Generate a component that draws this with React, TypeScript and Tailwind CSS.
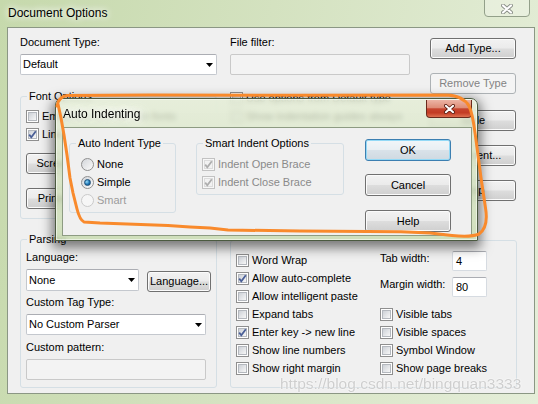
import type { ReactNode } from "react";

type Kids = { children?: ReactNode; className?: string };

function Btn({ children, className = "", disabled = false, primary = false }: Kids & { disabled?: boolean; primary?: boolean }) {
  const look = disabled
    ? "border-[#adb2b5] bg-[#f4f4f4] text-[#838383]"
    : primary
      ? "border-[#3c7fb1] bg-[linear-gradient(#f1f6f9_0%,#e9eff3_48%,#d9e2e9_52%,#cfd9e1_100%)] shadow-[inset_0_0_0_1px_#93d9f6]"
      : "border-[#707070] bg-[linear-gradient(#f2f2f2_0%,#ebebeb_48%,#dddddd_52%,#cfcfcf_100%)] shadow-[inset_0_0_0_1px_#fbfbfb]";
  return (
    <div className={`flex shrink-0 items-center justify-center overflow-hidden whitespace-nowrap rounded-[3px] border ${look} ${className}`}>
      {children}
    </div>
  );
}

function Check({ checked = false, disabled = false }: { checked?: boolean; disabled?: boolean }) {
  return (
    <span className={`relative flex h-[13px] w-[13px] shrink-0 items-center justify-center border ${disabled ? "border-[#c2c2c2] bg-[#f7f7f7]" : "border-[#8f8f8f] bg-white"}`}>
      <span className={`h-[9px] w-[9px] border ${disabled ? "border-[#dcdcdc] bg-[#f2f2f2]" : "border-[#b4b8be] bg-[linear-gradient(135deg,#cdd1d7,#f7f7f7)]"}`} />
      {checked && (
        <svg className="absolute inset-0" width="11" height="11" viewBox="0 0 11 11">
          <path d="M2.2 5.6 L4.3 8.2 L8.8 2.2" fill="none" stroke={disabled ? "#aeaeae" : "#4a5f97"} strokeWidth="1.8" />
        </svg>
      )}
    </span>
  );
}

function Radio({ checked = false, disabled = false }: { checked?: boolean; disabled?: boolean }) {
  return (
    <span className={`flex h-[13px] w-[13px] shrink-0 items-center justify-center rounded-full border ${disabled ? "border-[#cacaca] bg-[#f6f6f6]" : "border-[#8f8f8f] bg-[linear-gradient(135deg,#d2d5da,#fbfbfb)]"}`}>
      {checked && <span className="h-[7px] w-[7px] rounded-full border border-[#1d4f78] bg-[radial-gradient(circle_at_35%_35%,#9adcf8,#1f78b8_55%,#0d4471)]" />}
    </span>
  );
}

function Group({ label, className = "", children }: Kids & { label: string }) {
  return (
    <fieldset className={`rounded-[3px] border border-[#d5dfe5] ${className}`}>
      <legend className="ml-[6px] px-[2px] leading-[13px] whitespace-nowrap">{label}</legend>
      {children}
    </fieldset>
  );
}

function Combo({ value, className = "" }: { value: string; className?: string }) {
  return (
    <div className={`flex items-center justify-between rounded-[2px] border border-[#c4c8ce] border-t-[#abadb3] bg-white pl-[2px] pr-[3px] ${className}`}>
      <span className="whitespace-nowrap">{value}</span>
      <svg width="7" height="4" viewBox="0 0 7 4">
        <path d="M0 0H7L3.5 4Z" fill="#000" />
      </svg>
    </div>
  );
}

function Field({ value = "", disabled = false, className = "" }: { value?: string; disabled?: boolean; className?: string }) {
  return (
    <div className={`flex items-center rounded-[2px] border pl-[3px] ${disabled ? "border-[#c9c9c9] bg-[#f3f3f3]" : "border-[#d6dbe1] border-t-[#abadb3] bg-white"} ${className}`}>
      {value}
    </div>
  );
}

function Row({ children, className = "" }: Kids) {
  return <div className={`flex h-[18px] items-center gap-[3px] whitespace-nowrap ${className}`}>{children}</div>;
}

function XGlyph({ dark, w, h }: { dark: string; w: number; h: number }) {
  return (
    <svg width={w} height={h} viewBox="0 0 12 10">
      <path d="M2 1.5 L10 8.5 M10 1.5 L2 8.5" stroke={dark} strokeWidth="4" strokeLinecap="round" />
      <path d="M2 1.5 L10 8.5 M10 1.5 L2 8.5" stroke="#fff" strokeWidth="2.2" strokeLinecap="round" />
    </svg>
  );
}

function AutoIndentDialog() {
  return (
    <div className="absolute left-[55px] top-[98px] flex h-[143px] w-[423px] flex-col rounded-t-[7px] border border-[#4b5a40] bg-[linear-gradient(rgba(228,237,213,0.8),rgba(200,219,176,0.82))] shadow-[0_4px_12px_3px_rgba(0,0,0,0.5),inset_0_0_0_1px_rgba(255,255,255,0.55)] backdrop-blur-[2.5px]">
      <div className="flex h-[28px] shrink-0">
        <span className="self-center pl-[7px] pt-[2px] text-[12px] [text-shadow:0_0_6px_#fff,0_0_10px_#fff,0_0_14px_#fff]">Auto Indenting</span>
        <div className="ml-auto mr-[5px] mt-[1px] flex h-[18px] w-[46px] items-center justify-center rounded-b-[4px] border border-t-0 border-[#6a2a1c] bg-[linear-gradient(#ecb4a5_0%,#de8d78_45%,#c6452f_52%,#c33c24_75%,#de7050_100%)]">
          <XGlyph dark="#5b1e12" w={11} h={10} />
        </div>
      </div>
      <div className="mb-[4px] ml-[6px] mr-[5px] flex-1 border border-[#8d9b82] bg-[#f0f0f0]">
        <div className="flex items-start pl-[6px] pt-[9px]">
          <Group label="Auto Indent Type" className="h-[76px] w-[107px]">
            <div className="pl-[11px] pt-[5px]">
              <Row><Radio />None</Row>
              <Row><Radio checked />Simple</Row>
              <Row className="text-[#9c9c9c]"><Radio disabled />Smart</Row>
            </div>
          </Group>
          <Group label="Smart Indent Options" className="ml-[20px] h-[58px] w-[148px]">
            <div className="pl-[5px] pt-[5px] text-[#8a8a8a]">
              <Row><Check checked disabled />Indent Open Brace</Row>
              <Row><Check checked disabled />Indent Close Brace</Row>
            </div>
          </Group>
          <div className="ml-[21px] flex w-[86px] flex-col">
            <Btn primary className="mt-[2px] h-[22px]">OK</Btn>
            <Btn className="mt-[13px] h-[22px]">Cancel</Btn>
            <Btn className="mt-[14px] h-[22px]">Help</Btn>
          </div>
        </div>
      </div>
    </div>
  );
}

export default function App() {
  return (
    <div className="relative h-[404px] w-[538px] overflow-hidden bg-[linear-gradient(100deg,#c6d9ac_0%,#d4e2c0_45%,#e5eed9_100%)] font-['Liberation_Sans',Arial,sans-serif] text-[11px] leading-[13px] text-black">
      <div className="flex h-[27px] items-center pl-[8px]">
        <span className="text-[12px] [text-shadow:0_0_6px_#fff,0_0_10px_#fff]">Document Options</span>
      </div>
      <div className="absolute left-[484px] top-[-1px] flex h-[18px] w-[46px] items-center justify-center rounded-b-[4px] border border-[#93a08a] bg-[rgba(255,255,255,0.25)] pt-[1px]">
        <XGlyph dark="#8a8f88" w={12} h={10} />
      </div>

      <div className="ml-[7px] mr-[3px] h-[367px] border border-[#8b9784] bg-[#f0f0f0]">
        <div className="flex h-[205px] pl-[12px] pt-[8px]">
          <div className="flex w-[197px] flex-col">
            <span>Document Type:</span>
            <Combo value="Default" className="mt-[5px] h-[21px]" />
            <Group label="Font Options" className="mt-[15px] h-[129px]">
              <div className="pl-[5px] pt-[4px]">
                <Row><Check />Embolden text for thin fonts</Row>
                <Row><Check checked />Line nos.</Row>
                <Btn className="mt-[10px] h-[21px] w-[90px]">Screen Font...</Btn>
                <Btn className="mt-[14px] h-[21px] w-[90px]">Printer Font...</Btn>
              </div>
            </Group>
          </div>
          <div className="ml-[13px] flex w-[180px] flex-col">
            <span>File filter:</span>
            <Field disabled className="mt-[5px] h-[21px]" />
            <Row className="mt-[14px]"><Check />Use options from Default type</Row>
            <Row><Check />Show indentation guides always</Row>
          </div>
          <div className="ml-[20px] flex w-[86px] flex-col">
            <Btn className="mt-[2px] h-[21px]">Add Type...</Btn>
            <Btn disabled className="mt-[14px] h-[21px]">Remove Type</Btn>
            <Btn className="mt-[16px] h-[21px]">Style</Btn>
            <Btn className="mt-[14px] h-[21px]">Comment...</Btn>
            <Btn className="mt-[14px] h-[21px]">Help</Btn>
          </div>
        </div>

        <div className="flex h-[155px] pl-[12px]">
          <Group label="Parsing" className="h-full w-[197px]">
            <div className="flex flex-col pl-[5px] pt-[5px]">
              <span>Language:</span>
              <div className="mt-[5px] flex items-start">
                <Combo value="None" className="h-[22px] w-[113px]" />
                <Btn className="ml-[8px] mt-[2px] h-[21px] w-[64px]">Language...</Btn>
              </div>
              <span className="mt-[4px]">Custom Tag Type:</span>
              <Combo value="No Custom Parser" className="mt-[5px] h-[21px] w-[180px]" />
              <span className="mt-[6px]">Custom pattern:</span>
              <Field disabled className="mt-[5px] h-[21px] w-[180px]" />
            </div>
          </Group>
          <div className="ml-[13px] mt-[7px] h-[148px] w-[287px] rounded-[3px] border border-[#d5dfe5]">
            <div className="flex pl-[5px] pt-[10px]">
              <div className="w-[144px]">
                <Row><Check />Word Wrap</Row>
                <Row><Check checked />Allow auto-complete</Row>
                <Row><Check />Allow intelligent paste</Row>
                <Row><Check />Expand tabs</Row>
                <Row><Check checked />Enter key -&gt; new line</Row>
                <Row><Check />Show line numbers</Row>
                <Row><Check />Show right margin</Row>
              </div>
              <div className="flex flex-col">
                <div className="flex h-[20px] items-start">
                  <span className="mt-[1px] w-[72px]">Tab width:</span>
                  <Field value="4" className="h-[20px] w-[35px]" />
                </div>
                <div className="mb-[8px] mt-[6px] flex h-[20px] items-start">
                  <span className="mt-[1px] w-[72px]">Margin width:</span>
                  <Field value="80" className="h-[20px] w-[35px]" />
                </div>
                <Row><Check />Visible tabs</Row>
                <Row><Check />Visible spaces</Row>
                <Row><Check />Symbol Window</Row>
                <Row><Check />Show page breaks</Row>
              </div>
            </div>
          </div>
        </div>
      </div>

      <AutoIndentDialog />

      <svg className="pointer-events-none absolute inset-0" width="538" height="404" viewBox="0 0 538 404">
        <path
          d="M57 106 C58 100 61 96.5 67 95.5 L150 95 L300 95.3 L447 95 C457 95.5 465 99 469 106 C473 114 474 125 476 140 L481 178 L485.5 208 C487.5 220 486 229 479 234 C472 237 462 236.5 452 235.5 L430 233 L401 231.8 L300 231 L228 230 L210 228 L190 227 L168 225.5 L100 223 L84 222 C80 220 78.5 215 77 209 L73 193 L70 178 L67 155 L64 135 L61 118 L58 104"
          fill="none"
          stroke="#f98a2c"
          strokeWidth="3"
          strokeLinecap="round"
          strokeLinejoin="round"
        />
      </svg>

      <span className="absolute left-[280px] top-[375px] whitespace-nowrap text-[15.5px] leading-[17px] text-[rgba(185,185,185,0.7)] [text-shadow:0_0_1px_#fff,0_0_2px_#fff]">
        https://blog.csdn.net/bingquan3333
      </span>
    </div>
  );
}
